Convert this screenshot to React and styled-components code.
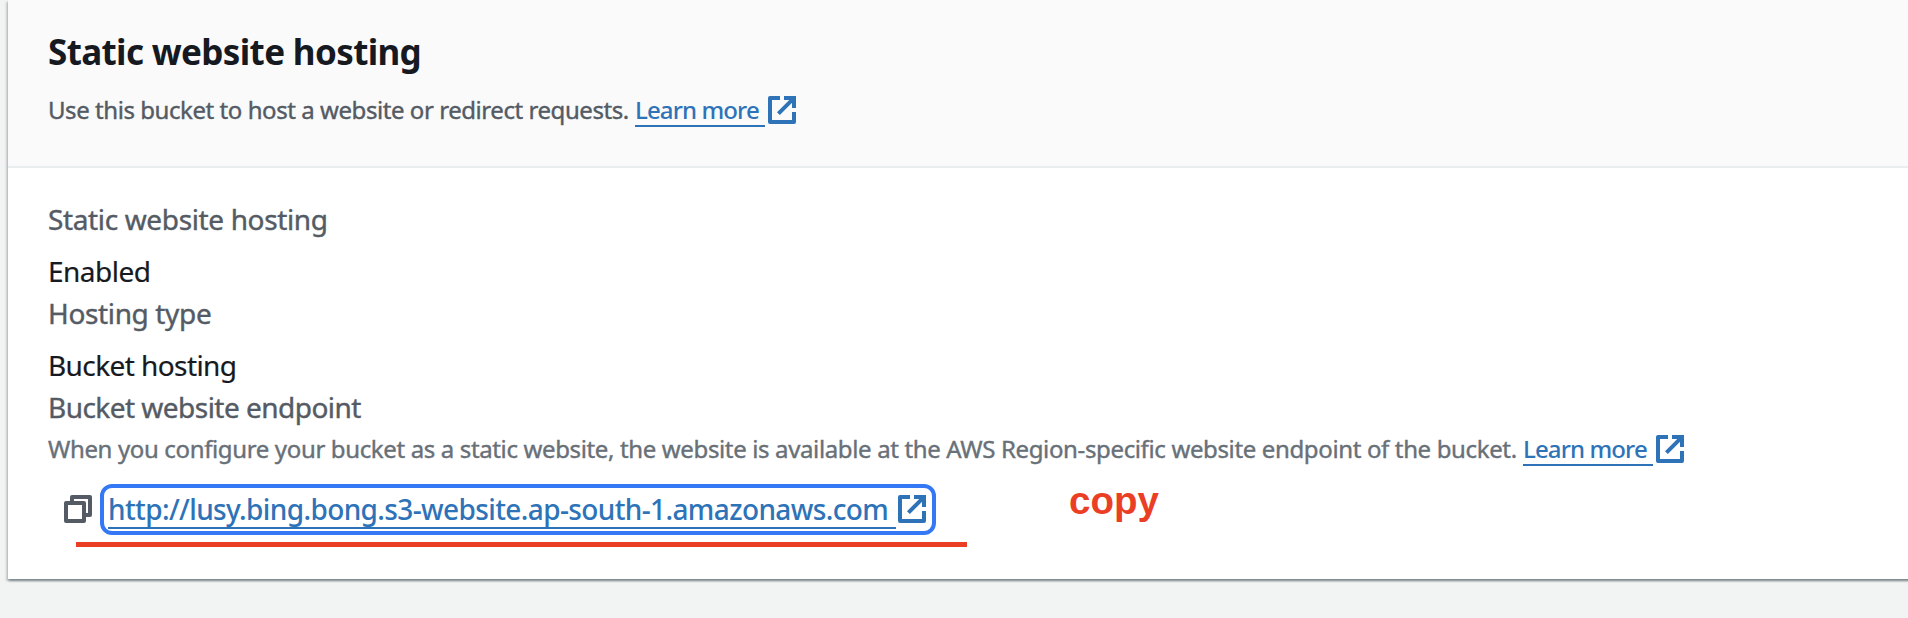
import React from "react";
import styled, { createGlobalStyle } from "styled-components";

const GlobalStyle = createGlobalStyle`
  * { box-sizing: border-box; }
  body {
    margin: 0;
    background: #f2f3f3;
    overflow: hidden;
    font-family: "Noto Sans", "Open Sans", sans-serif;
    color: #16191f;
  }
`;

const Page = styled.main`
  height: 618px;
  padding-left: 8px;
  overflow: hidden;
`;

const Panel = styled.section`
  position: relative;
  width: 1920px;
  height: 579px;
  background: #ffffff;
  box-shadow:
    0 2px 2px 0 rgba(0, 28, 36, 0.3),
    2px 2px 2px 0 rgba(0, 28, 36, 0.15),
    -2px 2px 2px 0 rgba(0, 28, 36, 0.15);
`;

const PanelHeader = styled.header`
  height: 168px;
  padding: 30px 40px 0;
  background: #fafafa;
  border-bottom: 2px solid #eaeded;
`;

const Title = styled.h2`
  margin: 0 0 18px;
  font-size: 35px;
  font-weight: 700;
  line-height: 44px;
  letter-spacing: -0.64px;
`;

const PanelBody = styled.div`
  padding: 30px 40px 0;
`;

const Description = styled.div`
  display: flex;
  align-items: flex-start;
  height: 36px;
  margin-top: ${(p) => p.$top || 0}px;
  font-size: 24px;
  line-height: 36px;
  white-space: nowrap;
  color: ${(p) => p.$color};
`;

const DescriptionText = styled.span`
  width: ${(p) => p.$width}px;
  letter-spacing: ${(p) => p.$spacing}px;
  -webkit-text-stroke: 0.4px currentColor;
`;

const Label = styled.div`
  font-size: 28px;
  line-height: 42px;
  color: #545b64;
  letter-spacing: ${(p) => p.$spacing}px;
  -webkit-text-stroke: 0.4px currentColor;
`;

const Value = styled(Label)`
  margin-top: 10px;
  color: #16191f;
  -webkit-text-stroke-width: 0.2px;
`;

const Link = styled.a`
  display: inline-flex;
  align-items: flex-start;
  color: #2e73b8;
  font-weight: 500;
  text-decoration: none;
  white-space: nowrap;
`;

const LinkText = styled.span`
  width: ${(p) => p.$width}px;
  height: ${(p) => p.$height}px;
  border-bottom: 2px solid currentColor;
  letter-spacing: ${(p) => p.$spacing}px;
`;

const Icon = styled.svg`
  flex: none;
  width: 28px;
  height: 28px;
  margin: ${(p) => p.$margin};
  fill: none;
  stroke: currentColor;
  stroke-width: 4;
  stroke-linejoin: round;
`;

const EndpointRow = styled.div`
  display: flex;
  align-items: flex-start;
  margin-top: 17px;
  padding-left: 16px;
`;

const CopyButton = styled.button`
  display: flex;
  margin: 11px 8px 0 0;
  padding: 0;
  border: 0;
  background: none;
  color: #545b64;
`;

const EndpointLink = styled(Link)`
  width: 836px;
  height: 51px;
  padding-left: 4px;
  border: 4px solid #3478f6;
  border-radius: 12px;
  font-size: 28px;
  line-height: 42px;
`;

const RedLine = styled.div`
  position: absolute;
  left: 68px;
  top: 542px;
  width: 891px;
  height: 5px;
  background: #ea3f25;
`;

const RedNote = styled.div`
  position: absolute;
  left: 1061px;
  top: 478px;
  font: 700 38.5px/46px "Liberation Sans", Arial, sans-serif;
  color: #ea3f25;
`;

function ExternalIcon({ margin }) {
  return (
    <Icon $margin={margin} viewBox="0 0 28 28" aria-hidden="true">
      <path d="M12 2H2v24h24V16" />
      <path d="M16 2h10v10M10.4 17.6L25.4 2.6" strokeLinejoin="miter" />
    </Icon>
  );
}

function CopyIcon() {
  return (
    <Icon $margin="0" viewBox="0 0 28 28" aria-hidden="true">
      <path d="M2 8h18v18H2z" />
      <path d="M8 7V2h18v18h-5" />
    </Icon>
  );
}

function LearnMore() {
  return (
    <Link>
      <LinkText $width={130} $height={35} $spacing={-0.88}>
        Learn more
      </LinkText>
      <ExternalIcon margin="4px 0 0 3px" />
    </Link>
  );
}

export default function App() {
  return (
    <>
      <GlobalStyle />
      <Page>
        <Panel>
          <PanelHeader>
            <Title>Static website hosting</Title>
            <Description $color="#545b64">
              <DescriptionText $width={587} $spacing={-0.44}>
                Use this bucket to host a website or redirect requests.
              </DescriptionText>
              <LearnMore />
            </Description>
          </PanelHeader>
          <PanelBody>
            <Label $spacing={-0.36}>Static website hosting</Label>
            <Value $spacing={-0.5}>Enabled</Value>
            <Label $spacing={-0.36}>Hosting type</Label>
            <Value $spacing={-0.58}>Bucket hosting</Value>
            <Label $spacing={-0.53}>Bucket website endpoint</Label>
            <Description $color="#687078" $top={3}>
              <DescriptionText $width={1475} $spacing={-0.36}>
                When you configure your bucket as a static website, the website is available at the
                AWS Region-specific website endpoint of the bucket.
              </DescriptionText>
              <LearnMore />
            </Description>
            <EndpointRow>
              <CopyButton aria-label="Copy">
                <CopyIcon />
              </CopyButton>
              <EndpointLink>
                <LinkText $width={788} $height={41} $spacing={-0.62}>
                  http://lusy.bing.bong.s3-website.ap-south-1.amazonaws.com
                </LinkText>
                <ExternalIcon margin="7px 0 0 2px" />
              </EndpointLink>
            </EndpointRow>
          </PanelBody>
          <RedLine />
          <RedNote>copy</RedNote>
        </Panel>
      </Page>
    </>
  );
}
